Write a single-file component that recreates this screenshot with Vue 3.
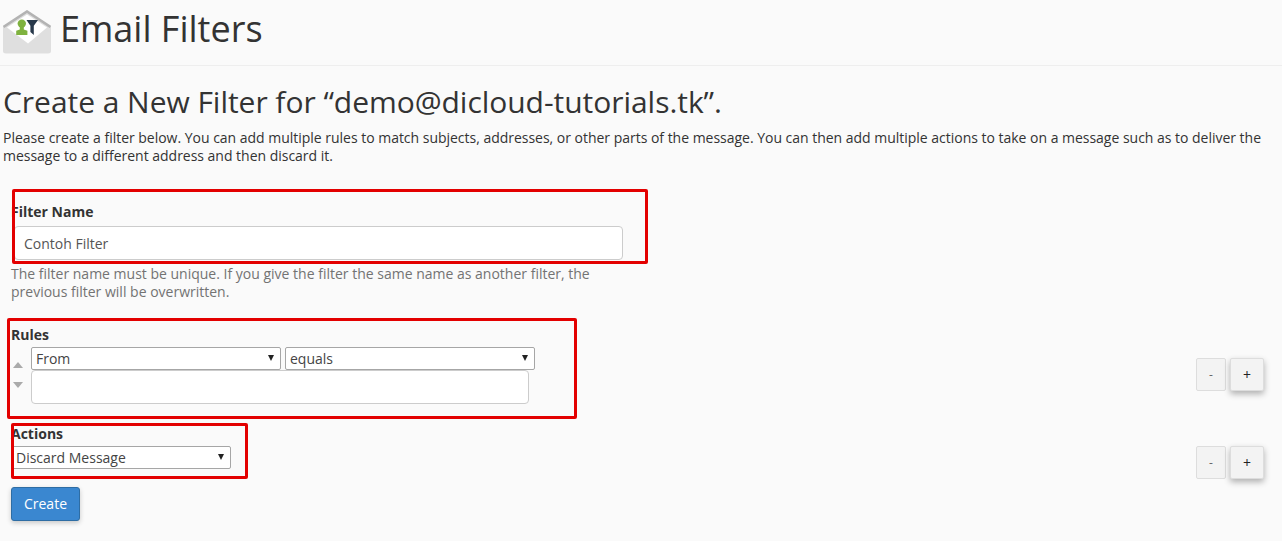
<script setup>
import { ref } from 'vue'

const filterName = ref('Contoh Filter')
const ruleValue = ref('')
</script>

<template>
  <div class="page">
    <header class="page-head">
      <svg class="head-icon" width="48" height="44" viewBox="0 0 48 44">
        <path d="M0 17 L24 1 L48 17 L48 41 Q48 43.5 45 43.5 L3 43.5 Q0 43.5 0 41 Z" fill="#dfdfdf" />
        <path d="M0.5 17 L24 1.5 L47.5 17" fill="none" stroke="#b3b3b3" stroke-width="2.6" />
        <path d="M4 17.5 L24 4.5 L44 17.5 L25 33.5 Z" fill="#ffffff" />
        <circle cx="18.8" cy="13.6" r="4.2" fill="#7fb23f" />
        <path d="M16.8 16.5 L20.8 16.5 L20.8 19.4 L24.4 20.8 L24.4 25 L13.2 25 L13.2 20.8 L16.8 19.4 Z" fill="#7fb23f" />
        <path d="M23.5 10 L35 10 L30.8 15.8 L30.8 25 L27.4 22 L27.4 15.8 Z" fill="#27384a" />
      </svg>
      <h1>Email Filters</h1>
    </header>

    <h2>Create a New Filter for “demo@dicloud-tutorials.tk”.</h2>
    <p class="intro">Please create a filter below. You can add multiple rules to match subjects, addresses, or other parts of the message. You can then add multiple actions to take on a message such as to deliver the message to a different address and then discard it.</p>

    <form class="filter-form" @submit.prevent>
      <section class="name-group">
        <label class="field-label">Filter Name</label>
        <input v-model="filterName" class="text-input name-input" type="text" />
        <p class="help">The filter name must be unique. If you give the filter the same name as another filter, the previous filter will be overwritten.</p>
      </section>

      <section class="rules-group">
        <label class="field-label">Rules</label>
        <div class="row">
          <div class="arrows">
            <span class="arrow-up"></span>
            <span class="arrow-down"></span>
          </div>
          <div class="rule-fields">
            <div class="select-row">
              <div class="select-wrap from-select">
                <select><option>From</option></select>
              </div>
              <div class="select-wrap equals-select">
                <select><option>equals</option></select>
              </div>
            </div>
            <input v-model="ruleValue" class="text-input rule-input" type="text" />
          </div>
          <div class="step-btns rule-steps">
            <button type="button" class="step minus">-</button>
            <button type="button" class="step plus">+</button>
          </div>
        </div>
      </section>

      <section class="actions-group">
        <label class="field-label">Actions</label>
        <div class="row">
          <div class="select-wrap action-select">
            <select><option>Discard Message</option></select>
          </div>
          <div class="step-btns action-steps">
            <button type="button" class="step minus">-</button>
            <button type="button" class="step plus">+</button>
          </div>
        </div>
      </section>

      <button type="submit" class="create-btn">Create</button>
    </form>

    <!-- annotations drawn over the screenshot -->
    <div class="mark mark-name"></div>
    <div class="mark mark-rules"></div>
    <div class="mark mark-actions"></div>
  </div>
</template>

<style>
html,
body {
  margin: 0;
  background: #fafafa;
}
</style>

<style scoped>
.page {
  position: relative;
  width: 1282px;
  height: 541px;
  overflow: hidden;
  box-sizing: border-box;
  background: #fafafa;
  color: #333;
  font-family: "Open Sans", sans-serif;
  font-size: 14px;
  line-height: 18px;
}

.page-head {
  display: flex;
  align-items: flex-start;
  gap: 9px;
  box-sizing: border-box;
  height: 66px;
  padding: 10px 0 0 3px;
  border-bottom: 1px solid #eee;
}

.head-icon {
  flex: none;
}

h1 {
  margin: -3px 0 0;
  font-size: 36px;
  font-weight: 400;
  line-height: 44px;
}

h2 {
  margin: 15px 0 0 3px;
  font-size: 30px;
  font-weight: 400;
  line-height: 42px;
  letter-spacing: -0.04px;
}

.intro {
  margin: 6px 0 0 3px;
  letter-spacing: -0.018px;
}

.filter-form {
  margin-top: 38px;
  padding-left: 11px;
}

.field-label {
  display: block;
  font-weight: 700;
  line-height: 18px;
}

.text-input {
  display: block;
  box-sizing: border-box;
  border: 1px solid #ccc;
  border-radius: 4px;
  background: #fff;
  color: #555;
  font: inherit;
  outline: none;
}

.name-input {
  width: 609px;
  height: 34px;
  margin: 5px 0 0 3px;
  padding: 0 9px;
}

.help {
  width: 600px;
  margin: 5px 0 0;
  color: #737373;
}

.rules-group {
  margin-top: 25px;
}

.row {
  display: flex;
}

.arrows {
  display: flex;
  flex-direction: column;
  align-items: center;
  gap: 14px;
  width: 14px;
  margin-right: 6px;
  padding-top: 15px;
}

.arrow-up,
.arrow-down {
  width: 0;
  height: 0;
  border-left: 5px solid transparent;
  border-right: 5px solid transparent;
}

.arrow-up {
  border-bottom: 6px solid #aaa;
}

.arrow-down {
  border-top: 6px solid #aaa;
}

.rules-group .row {
  margin-top: 3px;
}

.select-row {
  display: flex;
  gap: 4px;
}

.select-wrap {
  position: relative;
  box-sizing: border-box;
  height: 23px;
}

.select-wrap::after {
  content: "";
  position: absolute;
  top: 8px;
  right: 7px;
  width: 0;
  height: 0;
  border-left: 3.5px solid transparent;
  border-right: 3.5px solid transparent;
  border-top: 6px solid #222;
  pointer-events: none;
}

select {
  display: block;
  width: 100%;
  height: 100%;
  box-sizing: border-box;
  padding: 0 0 0 4px;
  border: 1px solid #a6a6a6;
  border-radius: 2px;
  background: #fff;
  color: #444;
  font: inherit;
  appearance: none;
  outline: none;
}

.from-select {
  width: 250px;
}

.equals-select {
  width: 250px;
}

.action-select {
  width: 220px;
}

.rule-input {
  width: 498px;
  height: 34px;
}

.step-btns {
  display: flex;
  gap: 4px;
  margin-left: auto;
  margin-right: 18px;
}

.rule-steps {
  margin-top: 11px;
}

.step {
  box-sizing: border-box;
  height: 33px;
  padding: 0;
  border: 1px solid #ddd;
  border-radius: 2px;
  background: #f3f3f3;
  color: #666;
  font: inherit;
  font-size: 12px;
}

.minus {
  width: 30px;
}

.plus {
  width: 34px;
  color: #222;
  font-size: 14px;
  box-shadow: 0 3px 6px rgba(0, 0, 0, 0.3);
}

.actions-group {
  margin-top: 21px;
}

.actions-group .row {
  margin-top: 3px;
}

.create-btn {
  display: block;
  box-sizing: border-box;
  width: 69px;
  height: 34px;
  margin-top: 8px;
  border: 1px solid #2e6da4;
  border-radius: 3px;
  background: #3a87d0;
  color: #fff;
  font: inherit;
  box-shadow: 0 2px 5px rgba(0, 0, 0, 0.2);
}

.mark {
  position: absolute;
  box-sizing: border-box;
  border: 3px solid #e30000;
  border-radius: 2px;
  pointer-events: none;
}

.mark-name {
  left: 12px;
  top: 189px;
  width: 636px;
  height: 75px;
}

.mark-rules {
  left: 7px;
  top: 318px;
  width: 570px;
  height: 101px;
}

.mark-actions {
  left: 11px;
  top: 423px;
  width: 237px;
  height: 56px;
}
</style>
